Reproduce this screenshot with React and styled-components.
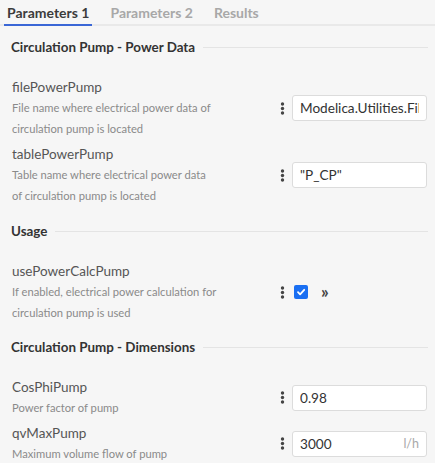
import React from "react";
import styled, { createGlobalStyle } from "styled-components";

const Global = createGlobalStyle`
  html, body { margin: 0; padding: 0; background: #f6f6f6; }
  body { font-family: Lato, "Open Sans", sans-serif; color: #333; }
  * { box-sizing: border-box; }
`;

const Page = styled.div`
  width: 435px;
  min-height: 463px;
  background: #f6f6f6;
  overflow: hidden;
`;

const TabBar = styled.div`
  display: flex;
  gap: 15px;
  padding: 0 4px;
  height: 26px;
  border-bottom: 2px solid #e9e9e9;
`;

const Tab = styled.div`
  padding: 4px 3px 0;
  font-size: 14px;
  font-weight: 700;
  line-height: 17px;
  color: ${(p) => (p.$active ? "#3c3c3c" : "#a8a8a8")};
  border-bottom: 2px solid ${(p) => (p.$active ? "#3a67d6" : "transparent")};
  margin-bottom: -2px;
`;

const Body = styled.div`
  padding: 0 7px 0 11px;
`;

const Section = styled.section`
  padding-top: ${(p) => p.$top}px;
`;

const SectionHeader = styled.div`
  display: flex;
  align-items: center;
  gap: 8px;
  height: 18px;
  margin-bottom: 21px;
  font-size: 13.4px;
  font-weight: 700;
  color: #333;
  white-space: nowrap;
  &::after {
    content: "";
    flex: 1;
    height: 1px;
    background: #e4e4e4;
  }
`;

const Rows = styled.div`
  display: flex;
  flex-direction: column;
  gap: 5px;
`;

const Row = styled.div`
  display: flex;
  align-items: center;
  justify-content: space-between;
`;

const Info = styled.div`
  padding-left: 1px;
`;

const Name = styled.div`
  font-size: 13.5px;
  line-height: 20px;
  color: #555;
`;

const Desc = styled.div`
  font-size: 11.2px;
  line-height: 21px;
  color: #8a8a8a;
  white-space: nowrap;
`;

const Controls = styled.div`
  display: flex;
  align-items: center;
  width: 148px;
  gap: 7px;
`;

const Field = styled.div`
  display: flex;
  align-items: center;
  width: 135px;
  height: 26px;
  padding: 0 7px;
  background: #fff;
  border: 1px solid #dcdcdc;
  border-radius: 3px;
  font-size: 13.6px;
  color: #333;
  overflow: hidden;
  white-space: nowrap;
`;

const Value = styled.span`
  flex: 1;
  overflow: hidden;
`;

const Unit = styled.span`
  color: #a9a9a9;
  font-size: 12.5px;
`;

const Check = styled.span`
  display: inline-flex;
  align-items: center;
  justify-content: center;
  width: 14px;
  height: 14px;
  margin-left: 2px;
  border-radius: 2px;
  background: #1a6ff2;
`;

const More = styled.span`
  margin-left: 6px;
  font-size: 17px;
  font-weight: 700;
  color: #444;
  line-height: 1;
  margin-top: -2px;
`;

const Dots = () => (
  <svg width="5" height="13" viewBox="0 0 5 13">
    <circle cx="2.5" cy="2" r="1.7" fill="#444" />
    <circle cx="2.5" cy="6.5" r="1.7" fill="#444" />
    <circle cx="2.5" cy="11" r="1.7" fill="#444" />
  </svg>
);

const Tick = () => (
  <svg width="10" height="10" viewBox="0 0 10 10">
    <path d="M2 5.2 L4.1 7.3 L8.2 2.8" stroke="#fff" strokeWidth="1.8" fill="none" strokeLinecap="round" strokeLinejoin="round" />
  </svg>
);

const sections = [
  {
    title: "Circulation Pump - Power Data",
    top: 12,
    params: [
      {
        name: "filePowerPump",
        desc: ["File name where electrical power data of", "circulation pump is located"],
        value: "Modelica.Utilities.Files.loadResource()",
      },
      {
        name: "tablePowerPump",
        desc: ["Table name where electrical power data", "of circulation pump is located"],
        value: "\"P_CP\"",
      },
    ],
  },
  {
    title: "Usage",
    top: 16,
    params: [
      {
        name: "usePowerCalcPump",
        desc: ["If enabled, electrical power calculation for", "circulation pump is used"],
        checkbox: true,
      },
    ],
  },
  {
    title: "Circulation Pump - Dimensions",
    top: 15,
    params: [
      { name: "CosPhiPump", desc: ["Power factor of pump"], value: "0.98" },
      { name: "qvMaxPump", desc: ["Maximum volume flow of pump"], value: "3000", unit: "l/h" },
    ],
  },
];

export default function App() {
  return (
    <Page>
      <Global />
      <TabBar>
        <Tab $active>Parameters 1</Tab>
        <Tab>Parameters 2</Tab>
        <Tab>Results</Tab>
      </TabBar>
      <Body>
        {sections.map((s) => (
          <Section key={s.title} $top={s.top}>
            <SectionHeader>{s.title}</SectionHeader>
            <Rows>
              {s.params.map((p) => (
                <Row key={p.name}>
                  <Info>
                    <Name>{p.name}</Name>
                    {p.desc.map((line) => (
                      <Desc key={line}>{line}</Desc>
                    ))}
                  </Info>
                  <Controls>
                    <Dots />
                    {p.checkbox ? (
                      <>
                        <Check>
                          <Tick />
                        </Check>
                        <More>»</More>
                      </>
                    ) : (
                      <Field>
                        <Value>{p.value}</Value>
                        {p.unit && <Unit>{p.unit}</Unit>}
                      </Field>
                    )}
                  </Controls>
                </Row>
              ))}
            </Rows>
          </Section>
        ))}
      </Body>
    </Page>
  );
}
